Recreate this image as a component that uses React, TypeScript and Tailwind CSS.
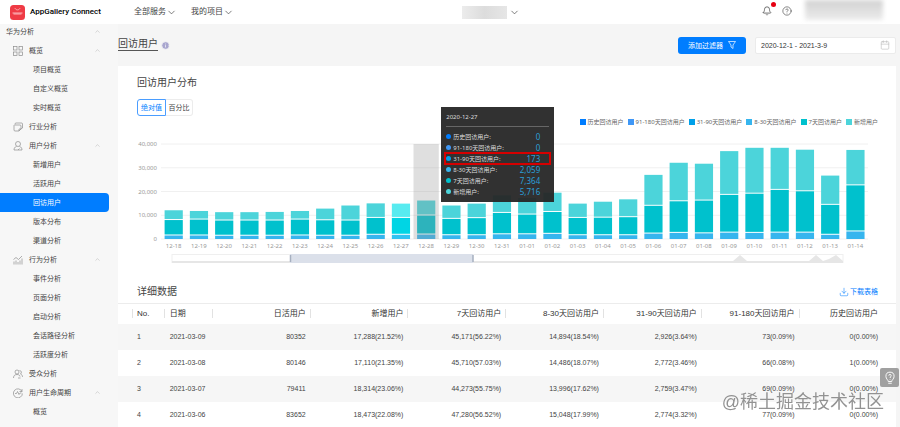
import {
  Bell,
  Calendar,
  ChevronDown,
  ChevronUp,
  CircleHelp,
  Download,
  Info,
} from "lucide-react";
import React from "react";

type Section = {
  label: string;
  icon: React.ReactNode;
  items?: string[];
};

const Glyph: React.FC<{ children: React.ReactNode }> = ({ children }) => (
  <svg
    viewBox="0 0 20 20"
    className="size-[10px] shrink-0"
    fill="none"
    stroke="#8c8c8c"
    strokeWidth="1.4"
  >
    {children}
  </svg>
);

const sections: Section[] = [
  {
    label: "概览",
    icon: (
      <Glyph>
        <rect x="1" y="1" width="7" height="7" />
        <rect x="12" y="1" width="7" height="7" />
        <rect x="1" y="12" width="7" height="7" />
        <rect x="12" y="12" width="7" height="7" />
      </Glyph>
    ),
    items: ["项目概览", "自定义概览", "实时概览"],
  },
  {
    label: "行业分析",
    icon: (
      <Glyph>
        <path d="M4 5V4a2 2 0 0 1 2-2h11a2 2 0 0 1 2 2v8l-3 2" />
        <path d="M3 6h11a2 2 0 0 1 2 2v6l-4 4H4a2 2 0 0 1-2-2V7zM12 18v-4h4" />
      </Glyph>
    ),
  },
  {
    label: "用户分析",
    icon: (
      <Glyph>
        <circle cx="10" cy="6" r="5" />
        <path d="M7 11c-4 1-5 4-5 7h16c0-3-1-6-5-7M10 18l3-3" />
      </Glyph>
    ),
    items: ["新增用户", "活跃用户", "回访用户", "版本分布", "渠道分析"],
  },
  {
    label: "行为分析",
    icon: (
      <Glyph>
        <path d="M2 19v-6M6 19v-8M10 19v-5M14 19v-8M18 19V7M1 9l5-4 5 4 7-7" />
      </Glyph>
    ),
    items: ["事件分析", "页面分析", "启动分析", "会话路径分析", "活跃度分析"],
  },
  {
    label: "受众分析",
    icon: (
      <Glyph>
        <circle cx="8" cy="6" r="4" />
        <path d="M1 18c0-4 2-7 7-7s6 3 6 4M13 3c4 0 5 5 2 7 3 1 4 4 4 6M10 18h5" />
      </Glyph>
    ),
  },
  {
    label: "用户生命周期",
    icon: (
      <Glyph>
        <path d="M18 7a9 9 0 1 0 .8 4M18 2v5h-5M4 11h3l2-4 3 6 2-3h3" />
      </Glyph>
    ),
    items: ["概览"],
  },
];

// running totals in hundreds of users: [all, 7-day and longer, 8-day and longer]
const days: [string, number, number, number][] = [
  ["12-18", 121, 84, 19],
  ["12-19", 118, 86, 19],
  ["12-20", 113, 82, 18],
  ["12-21", 113, 82, 18],
  ["12-22", 114, 82, 18],
  ["12-23", 118, 86, 19],
  ["12-24", 128, 83, 18],
  ["12-25", 141, 82, 18],
  ["12-26", 150, 93, 22],
  ["12-27", 149, 93, 22],
  ["12-28", 162, 103, 23],
  ["12-29", 141, 89, 20],
  ["12-30", 149, 92, 20],
  ["12-31", 184, 114, 24],
  ["01-01", 173, 107, 24],
  ["01-02", 195, 118, 26],
  ["01-03", 149, 93, 20],
  ["01-04", 157, 94, 20],
  ["01-05", 167, 96, 20],
  ["01-06", 270, 144, 27],
  ["01-07", 321, 163, 30],
  ["01-08", 317, 166, 28],
  ["01-09", 370, 190, 31],
  ["01-10", 384, 195, 30],
  ["01-11", 384, 211, 31],
  ["01-12", 376, 205, 31],
  ["01-13", 267, 148, 22],
  ["01-14", 375, 230, 36],
];

const legend = [
  { label: "历史回访用户", color: "bg-[#007dff]", value: "0" },
  { label: "91-180天回访用户", color: "bg-[#3f97f6]", value: "0" },
  { label: "31-90天回访用户", color: "bg-[#00a0e9]", value: "173" },
  { label: "8-30天回访用户", color: "bg-[#36b5ee]", value: "2,059" },
  { label: "7天回访用户", color: "bg-[#00c1cd]", value: "7,364" },
  { label: "新增用户", color: "bg-[#4cd4da]", value: "5,716" },
];

const columns = [
  "日活用户",
  "新增用户",
  "7天回访用户",
  "8-30天回访用户",
  "31-90天回访用户",
  "91-180天回访用户",
  "历史回访用户",
];

const rows = [
  ["2021-03-09", "80352", "17,288(21.52%)", "45,171(56.22%)", "14,894(18.54%)", "2,926(3.64%)", "73(0.09%)", "0(0.00%)"],
  ["2021-03-08", "80146", "17,110(21.35%)", "45,710(57.03%)", "14,486(18.07%)", "2,772(3.46%)", "66(0.08%)", "1(0.00%)"],
  ["2021-03-07", "79411", "18,314(23.06%)", "44,273(55.75%)", "13,996(17.62%)", "2,759(3.47%)", "69(0.09%)", "0(0.00%)"],
  ["2021-03-06", "83652", "18,473(22.08%)", "47,280(56.52%)", "15,048(17.99%)", "2,774(3.32%)", "77(0.09%)", "0(0.00%)"],
];

const Header = () => (
  <header className="flex h-6 items-center bg-white pl-[10px] text-[8px] text-[#444]">
    <svg viewBox="0 0 30 30" className="size-[15px]">
      <rect width="30" height="30" rx="7" fill="#ef3b45" />
      <path d="M10 6c1 5 9 5 10 0" fill="none" stroke="#ffc4c7" strokeWidth="1.5" />
      <path d="M5 16h20M7 18h16" stroke="#ffd9db" strokeWidth="1.5" />
    </svg>
    <span className="ml-[5px] w-[104px] font-[Roboto,sans-serif] font-medium text-black">
      AppGallery Connect
    </span>
    <button className="flex items-center">
      全部服务
      <ChevronDown className="size-[11px]" strokeWidth={1.5} />
    </button>
    <button className="ml-[14px] flex items-center">
      我的项目
      <ChevronDown className="size-[11px]" strokeWidth={1.5} />
    </button>
    <button aria-label="选择项目" className="ml-[228px] flex items-center gap-[2px]">
      <span className="h-[13px] w-[45px] bg-linear-to-r from-[#ececec] via-[#dcdcdc] to-[#e6e6e6]" />
      <ChevronDown className="size-[11px]" strokeWidth={1.5} />
    </button>
    <div className="ml-auto flex items-center self-start pr-[17px]">
      <button aria-label="通知" className="relative mt-[2px] flex">
        <Bell className="size-[10px]" strokeWidth={1.8} />
        <span className="absolute -top-1 -right-1 size-[5px] rounded-full bg-[#e60012]" />
      </button>
      <button aria-label="帮助" className="mt-[2px] ml-[10px] flex">
        <CircleHelp className="size-[10px]" strokeWidth={1.5} />
      </button>
      <span className="ml-[13px] h-5 w-[78px] bg-linear-to-b from-[#d2d2d2] to-[#ececec] blur-[2px]" />
    </div>
  </header>
);

const Sidebar = () => (
  <nav className="w-[118px] shrink-0 bg-[#f7f7f7] text-[7px] text-[#444]">
    <button className="flex h-[17px] w-full items-center justify-between pr-[17px] pb-[2px] pl-[6px]">
      华为分析
      <ChevronUp className="size-[7px] text-[#aaa]" strokeWidth={1.5} />
    </button>
    {sections.map((section) => (
      <div key={section.label}>
        <button className="flex h-[19px] w-full items-center pr-[17px] pl-[13px]">
          {section.icon}
          <span className="ml-[6px]">{section.label}</span>
          {section.items && (
            <ChevronUp className="ml-auto size-[7px] text-[#aaa]" strokeWidth={1.5} />
          )}
        </button>
        {section.items?.map((item) => (
          <a
            key={item}
            href="#"
            className={
              item === "回访用户"
                ? "mr-[9px] flex h-[19px] items-center rounded-r bg-[#007dff] pl-[33px] text-white"
                : "mr-[9px] flex h-[19px] items-center pl-[33px]"
            }
          >
            {item}
          </a>
        ))}
      </div>
    ))}
  </nav>
);

const BASE = 105;
const STEP = 707 / days.length;
const toY = (hundreds: number) => BASE - (hundreds * 95) / 400;

const Chart = () => (
  <svg viewBox="0 0 742 132" className="block w-full" fontSize="6">
    {[0, 100, 200, 300, 400].map((tick) => (
      <g key={tick}>
        <line x1="24" x2="731" y1={toY(tick)} y2={toY(tick)} stroke="#f0f0f0" />
        <text x="20" y={toY(tick) + 2} textAnchor="end" fill="#999">
          {tick === 0 ? "0" : `${tick / 10},000`}
        </text>
      </g>
    ))}
    {days.map(([day, all, week, month], i) => {
      const x = 24 + i * STEP;
      const hovered = day === "12-27";
      return (
        <g key={day}>
          <rect x={x + 3.6} width="18.2" y={toY(all)} height={toY(week) - toY(all)} fill={hovered ? "#58ebf0" : "#4cd4da"} />
          <rect x={x + 3.6} width="18.2" y={toY(week) + 1} height={toY(month) - toY(week) - 1} fill={hovered ? "#00d5e4" : "#00c1cd"} />
          <rect x={x + 3.6} width="18.2" y={toY(month) + 1} height={BASE - toY(month) - 1} fill={hovered ? "#31c2f2" : "#36b5ee"} />
          <text x={x + STEP / 2} y="114" textAnchor="middle" fill="#999">
            {day}
          </text>
        </g>
      );
    })}
    <rect x={24 + 10 * STEP} y="10" width={STEP} height="95" fill="#969696" fillOpacity="0.3" />

    {/* zoom slider */}
    <rect x="35" y="120.5" width="671" height="8" fill="#fff" stroke="#efefef" />
    <path d="M35 127H596L603 121L610 127H672L679 121L686 127L692 125L699 121L706 127V129H35Z" fill="#e6e6e6" />
    <rect x="153" y="120" width="183" height="9" fill="#dbe0ea" />
    <path d="M153.5 121v7M336 121v7" stroke="#a7b0c0" strokeWidth="1.5" />
  </svg>
);

const Tooltip = () => (
  <div className="absolute -top-[27px] left-[41%] h-[95px] w-[113px] bg-[#262626]/95 px-[5px] pt-[6px] text-[6px] text-[#ddd]">
    <div className="h-[14px] border-b border-[#666] leading-[9px]">2020-12-27</div>
    <ul className="pt-[4px]">
      {legend.map((entry) => (
        <li key={entry.label} className="relative flex h-[11px] items-center pr-[9px]">
          <span className={`mr-[2px] size-[5px] rounded-full ${entry.color}`} />
          {entry.label}:
          <span className="ml-auto text-[8px] text-[#2b9fd8]">{entry.value}</span>
          {entry.value === "173" && (
            <span className="absolute -inset-x-[2px] -inset-y-px border-2 border-[#d60000]" />
          )}
        </li>
      ))}
    </ul>
  </div>
);

const DataTable = () => (
  <table className="w-full table-fixed border-t border-[#ececec] text-right text-[7px] text-[#444]">
    <thead className="text-[8px] text-[#333]">
      <tr className="h-5">
        <th className="w-[6%] pl-[14px] text-left font-normal">
          <span className="block border-x border-[#e2e2e2] pl-1 leading-[9px]">No.</span>
        </th>
        <th className="w-[6.2%] text-left font-normal">
          <span className="block border-r border-[#e2e2e2] pl-[5px] leading-[9px]">日期</span>
        </th>
        {columns.map((column) => (
          <th key={column} className="group font-normal whitespace-nowrap last:w-[12.4%]">
            <span className="block border-r border-[#e2e2e2] pr-1 leading-[9px] group-last:border-0 group-last:pr-[18px]">
              {column}
            </span>
          </th>
        ))}
      </tr>
    </thead>
    <tbody>
      {rows.map(([date, ...cells], i) => (
        <tr key={date} className="h-[26px] odd:bg-[#f6f6f6]">
          <td className="pl-[19px] text-left">{i + 1}</td>
          <td className="pl-[5px] text-left">{date}</td>
          {cells.map((cell, j) => (
            <td key={j} className="pr-[5px] last:pr-[18px]">
              {cell}
            </td>
          ))}
        </tr>
      ))}
    </tbody>
  </table>
);

export default function App() {
  return (
    <div className="min-h-screen bg-[#f5f5f5] font-['Liberation_Sans','Noto_Sans_CJK_SC',sans-serif] leading-none">
      <Header />
      <div className="flex">
        <Sidebar />
        <main className="min-w-0 flex-1 pr-1">
          <div className="flex h-[42px] items-center">
            <h1 className="border-b border-[#555] pb-px text-[10px] text-[#444]">回访用户</h1>
            <Info className="ml-[3px] size-[9px] fill-[#a9a6cf] text-[#f5f5f5]" strokeWidth={2} />
            <button className="ml-auto flex h-[17px] w-[68px] items-center justify-center gap-[5px] rounded-[3px] bg-[#007dff] text-[7px] text-white">
              添加过滤器
              <svg viewBox="0 0 16 16" className="size-2" fill="none" stroke="white" strokeWidth="1.4">
                <path d="M1 1h14l-5 7v7l-4-3V8z" />
              </svg>
            </button>
            <label className="ml-[9px] flex h-[17px] w-[141px] items-center rounded-[2px] border border-[#ebebeb] bg-white px-[5px]">
              <input
                aria-label="日期范围"
                defaultValue="2020-12-1 - 2021-3-9"
                className="min-w-0 flex-1 text-[7px] text-[#333] outline-none"
              />
              <Calendar className="size-[10px] text-[#bbb]" strokeWidth={1.5} />
            </label>
          </div>

          <section className="bg-white">
            <div className="pt-[11px] pr-[17px] pl-[19px]">
              <h2 className="text-[10px] leading-3 text-[#444]">回访用户分布</h2>
              <div className="mt-[10px] flex h-[17px] text-[7px] text-[#444]">
                <button className="w-[29px] rounded-l-[3px] border border-[#4a9dff] text-[#007dff]">
                  绝对值
                </button>
                <button className="w-[27px] rounded-r-[3px] border border-l-0 border-[#ececec]">
                  百分比
                </button>
              </div>
              <div className="font-['Noto_Sans','Noto_Sans_CJK_SC',sans-serif]">
                <ul className="mt-[2px] flex h-2 items-center justify-end gap-1 pr-px text-[6px] text-[#666]">
                  {legend.map((entry) => (
                    <li key={entry.label} className="flex items-center gap-[2px]">
                      <span className={`size-[6px] ${entry.color}`} />
                      {entry.label}
                    </li>
                  ))}
                </ul>
                <div className="relative mt-2">
                  <Chart />
                  <Tooltip />
                </div>
              </div>
            </div>

            <div className="flex h-[37px] items-end justify-between pr-[18px] pb-[5px] pl-[19px]">
              <h2 className="text-[10px] leading-3 text-[#444]">详细数据</h2>
              <a href="#" className="flex items-center gap-px text-[7px] leading-3 text-[#007dff]">
                <Download className="size-[10px]" strokeWidth={1.3} />
                下载表格
              </a>
            </div>
            <DataTable />
          </section>
        </main>
      </div>

      <button
        aria-label="反馈"
        className="fixed right-px bottom-10 flex size-[19px] items-center justify-center rounded-[2px] bg-[#a0a0a0]"
      >
        <svg viewBox="0 0 24 24" className="size-[14px]" fill="none" stroke="white" strokeWidth="1.6">
          <path d="M9 18c0-3-4-4-4-9a7 7 0 0 1 14 0c0 5-4 6-4 9zM9 21h6M10 8c0-3 4-3 4 0 0 2-2 2-2 4M12 14v1" />
        </svg>
      </button>
      <div className="pointer-events-none fixed right-4 bottom-4 text-[18px] text-[#777]/80 text-shadow-[0_0_1px_#fff]">
        @稀土掘金技术社区
      </div>
    </div>
  );
}
